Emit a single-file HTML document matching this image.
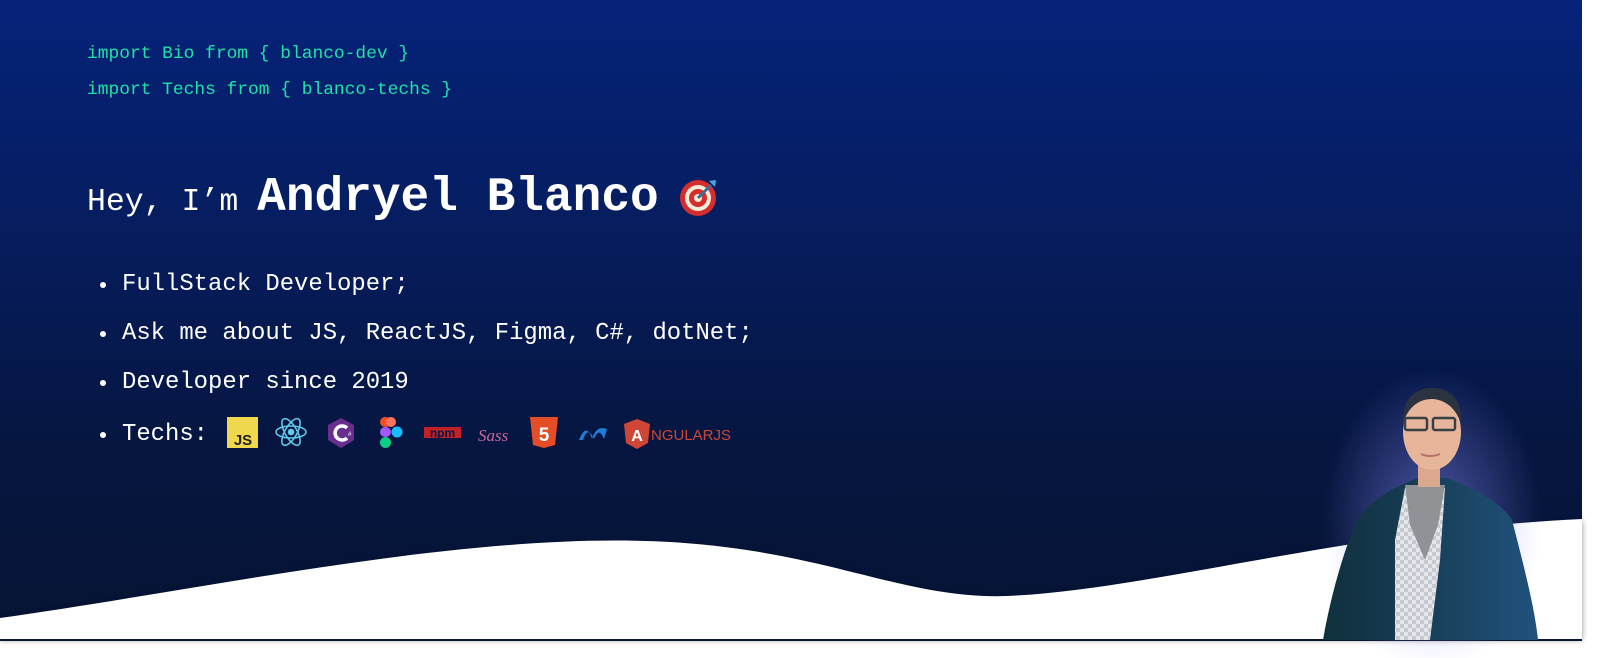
<!DOCTYPE html>
<html><head><meta charset="utf-8"><style>
html,body{margin:0;padding:0;background:#fff;}
body{width:1604px;height:658px;position:relative;overflow:hidden;font-family:"Liberation Mono",monospace;}
#bg{position:absolute;left:0;top:0;width:1582px;height:641px;background:linear-gradient(180deg,#06227a 0%,#061d5f 35%,#061640 70%,#061333 100%);}
svg.layer{position:absolute;left:0;top:0;}
.code{position:absolute;left:87px;color:#1fe3a6;font-size:17.9px;white-space:pre;}
.h{position:absolute;left:87px;top:171px;color:#fff;white-space:pre;}
.li{position:absolute;left:100px;color:#fff;font-size:23.9px;white-space:pre;}
.li:before{content:"";position:absolute;left:0;top:50%;width:6px;height:6px;border-radius:50%;background:#fff;margin-top:-3px;}
.li span{margin-left:22px;}
</style></head><body>
<div id="bg"></div>
<div class="code" style="top:44px">import Bio from { blanco-dev }</div>
<div class="code" style="top:80px">import Techs from { blanco-techs }</div>
<div class="h"><span style="font-size:31.5px">Hey, I’m </span><span style="font-size:47.8px;font-weight:bold">Andryel Blanco</span></div>
<svg class="layer" width="1604" height="658" style="z-index:1">
 <g transform="translate(698,198)">
  <circle r="18" fill="#d62d2d"/><circle r="13" fill="#f3ecd9"/><circle r="9" fill="#d62d2d"/><circle r="4" fill="#f3ecd9"/>
  <line x1="0" y1="0" x2="13" y2="-13" stroke="#3a6e9a" stroke-width="3"/>
  <path d="M11,-17 L18,-18 L17,-11 Z" fill="#45a8e0"/>
 </g>
</svg>
<div class="li" style="top:271px"><span>FullStack Developer;</span></div>
<div class="li" style="top:320px"><span>Ask me about JS, ReactJS, Figma, C#, dotNet;</span></div>
<div class="li" style="top:369px"><span>Developer since 2019</span></div>
<div class="li" style="top:421px"><span>Techs:</span></div>
<svg class="layer" width="1604" height="658" style="z-index:2">
 <defs>
  <filter id="sh" x="-5%" y="-20%" width="110%" height="140%"><feGaussianBlur stdDeviation="3"/></filter>
  <radialGradient id="glow" cx="0.5" cy="0.5" r="0.5"><stop offset="0" stop-color="#8a8cff" stop-opacity="0.55"/><stop offset="1" stop-color="#8a8cff" stop-opacity="0"/></radialGradient>
  <pattern id="chk" width="8" height="8" patternUnits="userSpaceOnUse"><rect width="8" height="8" fill="#e4e6ea"/><rect width="4" height="4" fill="#c6c9cf"/><rect x="4" y="4" width="4" height="4" fill="#c6c9cf"/></pattern>
  <linearGradient id="jk" x1="0" y1="0" x2="1" y2="0"><stop offset="0" stop-color="#10303c"/><stop offset="0.5" stop-color="#173f58"/><stop offset="1" stop-color="#21527e"/></linearGradient>
 </defs>
 <path d="M0,620 C200,592 450,537 646,543 C820,548 900,602 1007,598 C1150,592 1350,532 1582,521 L1582,640 L0,640 Z" fill="#000" opacity="0.45" filter="url(#sh)"/>
 <path d="M0,618 C200,590 450,535 646,541 C820,546 900,600 1007,596 C1150,590 1350,530 1582,519 L1582,641 L0,641 Z" fill="#fff"/>
 <rect x="0" y="639" width="1582" height="2" fill="#0b1733"/>
 <rect x="227" y="417" width="31" height="31" fill="#f0d84e"/>
 <text x="243" y="445" font-family="Liberation Sans" font-weight="bold" font-size="15" fill="#222" text-anchor="middle">JS</text>
 <g transform="translate(291,432)" fill="none" stroke="#5fc9ea" stroke-width="1.6">
  <ellipse rx="15" ry="6"/><ellipse rx="15" ry="6" transform="rotate(60)"/><ellipse rx="15" ry="6" transform="rotate(-60)"/>
  <circle r="2.5" fill="#5fc9ea"/>
 </g>
 <polygon points="341,418 354,425 354,440 341,448 328,440 328,425" fill="#6a2f8e"/>
 <path d="M347,428 A7,7 0 1 0 347,438" fill="none" stroke="#fff" stroke-width="3.5"/>
 <text x="348" y="436" font-size="6" fill="#fff" font-family="Liberation Sans">#</text>
 <g>
  <rect x="380" y="417" width="11" height="10" rx="5" fill="#f24e1e"/><rect x="386" y="417" width="10" height="10" rx="5" fill="#ff7262"/>
  <rect x="380" y="427" width="11" height="10" rx="5" fill="#a259ff"/><circle cx="397" cy="432" r="5.5" fill="#1abcfe"/>
  <rect x="380" y="437" width="11" height="11" rx="5.5" fill="#0acf83"/>
 </g>
 <rect x="424" y="427" width="37" height="11" fill="#c12127"/>
 <text x="442.5" y="437" font-family="Liberation Sans" font-weight="bold" font-size="12" fill="#061640" text-anchor="middle">npm</text>
 <text x="478" y="441" font-family="Liberation Serif" font-style="italic" font-size="17" fill="#cd6799">Sass</text>
 <polygon points="530,417 558,417 555,445 544,448 533,445" fill="#e44d26"/>
 <text x="544" y="441" font-family="Liberation Sans" font-weight="bold" font-size="19" fill="#fff" text-anchor="middle">5</text>
 <path d="M579,440 C584,428 588,427 592,439 C596,428 600,427 607,429 L604,439 C600,429 597,432 594,439 C590,430 586,430 583,440 Z" fill="#1e7ed6"/>
 <polygon points="637,419 650,424 648,443 637,449 626,443 624,424" fill="#d04636"/>
 <text x="637" y="441" font-family="Liberation Sans" font-weight="bold" font-size="16" fill="#fff" text-anchor="middle">A</text>
 <text x="651" y="440" font-family="Liberation Sans" font-size="15" fill="#d04636">NGULARJS</text>
 <ellipse cx="1432" cy="520" rx="110" ry="150" fill="url(#glow)"/>
 <path d="M1357,520 C1375,495 1400,485 1418,478 L1448,478 C1470,488 1500,500 1512,520 C1525,570 1535,610 1538,640 L1323,640 C1330,600 1342,555 1357,520 Z" fill="url(#jk)"/>
 <path d="M1405,488 L1445,488 L1440,560 L1430,640 L1395,640 L1395,540 Z" fill="url(#chk)"/>
 <path d="M1405,485 L1445,485 L1438,525 L1425,560 L1410,525 Z" fill="#8f9396"/>
 <rect x="1418" y="455" width="22" height="32" fill="#d9a88e"/>
 <ellipse cx="1432" cy="432" rx="29" ry="38" fill="#e6b59a"/>
 <path d="M1403,424 C1402,399 1415,388 1432,388 C1452,388 1463,402 1461,424 C1455,404 1440,399 1432,399 C1420,399 1408,406 1403,424 Z" fill="#2b3340"/>
 <rect x="1405" y="418" width="22" height="12" rx="2" fill="none" stroke="#3a3f48" stroke-width="2.5"/>
 <rect x="1433" y="418" width="22" height="12" rx="2" fill="none" stroke="#3a3f48" stroke-width="2.5"/>
 <path d="M1421,454 Q1430,458 1440,454" stroke="#b7716a" stroke-width="2" fill="none"/>
</svg>
</body></html>
